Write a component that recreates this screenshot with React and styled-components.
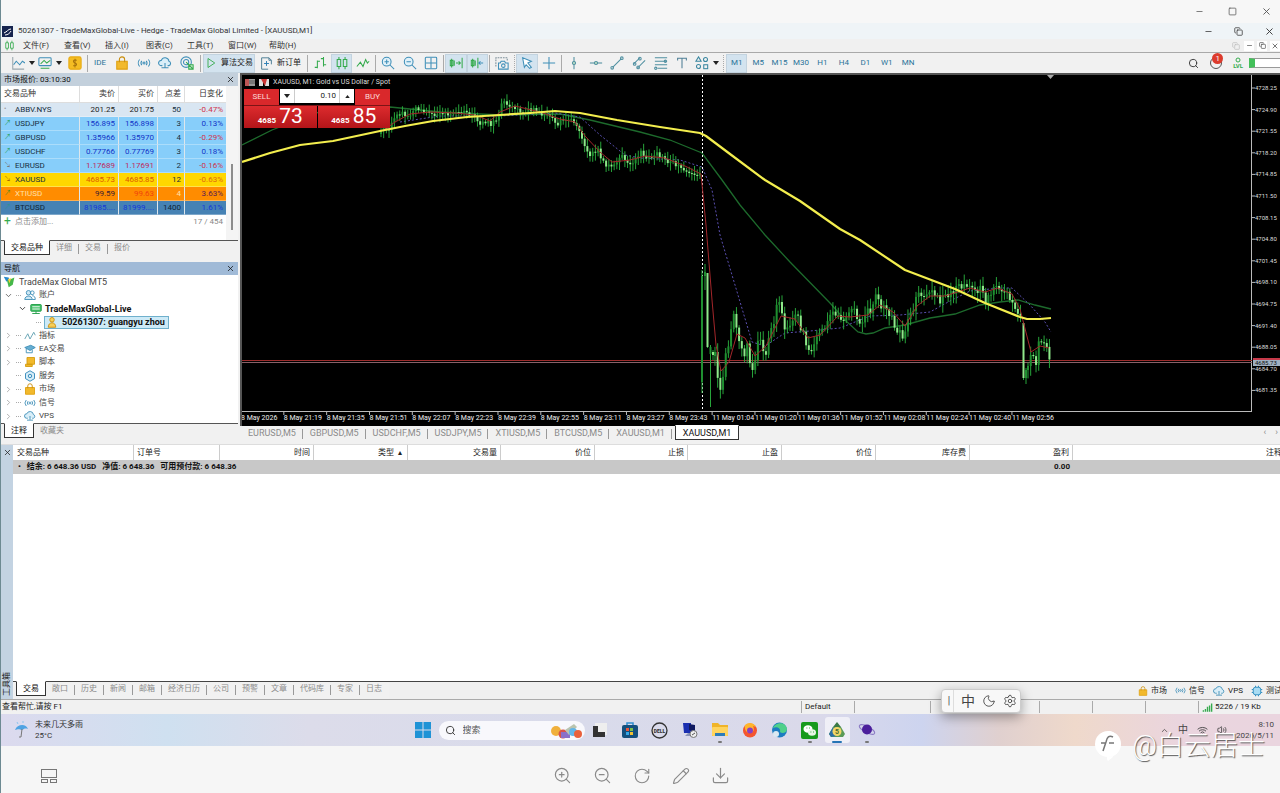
import React from "react";
import styled, { createGlobalStyle, css } from "styled-components";
import {
  Search, Minus, Square, X, Copy, ZoomIn, ZoomOut, RotateCw, Pencil, Download,
  Moon, Settings, Wifi, Volume2, ChevronDown, ChevronRight, ChevronUp,
} from "lucide-react";

const BLUE = "#3f8fb8";
const GREEN = "#35ab4d";
const GOLD = "#f2b92c";

const GlobalStyle = createGlobalStyle`
  * { box-sizing: border-box; }
  body {
    margin: 0;
    background: #f6f6f6;
    font-family: Roboto, "Noto Sans CJK SC", sans-serif;
    font-size: 8px;
    line-height: 12px;
    color: #333;
  }
  button, input {
    font: inherit;
    color: inherit;
    margin: 0;
    padding: 0;
    border: 0;
    background: none;
  }
  svg { display: block; flex: none; }
  ul { list-style: none; margin: 0; padding: 0; }
`;

/* ---------- icons ---------- */

const Ico = ({ size = 14, color = BLUE, children }) => (
  <svg width={size} height={size} viewBox="0 0 16 16" fill="none" stroke={color} strokeWidth="1.2">
    {children}
  </svg>
);

const Caret = () => (
  <svg width="6" height="4" viewBox="0 0 6 4"><path d="M0 0h6L3 4z" fill="#222" /></svg>
);

const icons = {
  chartLine: <Ico><path d="M2 1v14h13" stroke="#9aa7ad" /><path d="M3 10l3-4 4 4 3-4 3 2" /></Ico>,
  template: <Ico><rect x="1" y="2" width="14" height="9" rx="1" /><path d="M3 9l4-4 3 3 4-3M3 14h10" stroke={GREEN} /></Ico>,
  dollar: <Ico><rect x="1" y="1" width="14" height="14" rx="2" fill="#f4bd23" stroke="#e8aa10" /><path d="M10 5c-4-2-5 2-2 3s2 4-2 3M8 3v10" stroke="#a8740c" /></Ico>,
  bag: <Ico><path d="M2 6h12v9H2z" fill={GOLD} stroke="#dfa010" /><path d="M5 7V4a3 3 0 016 0v3" stroke="#c98d0c" /></Ico>,
  signal: <Ico><circle cx="8" cy="8" r="1.2" /><path d="M5.500 5.500a4 4 0 000 5M10.500 5.500a4 4 0 010 5M3 4a6 6 0 000 8M13 4a6 6 0 010 8" /></Ico>,
  cloud: <Ico><path d="M5 11H3.500a3 3 0 01.3-6A4.500 4.500 0 0112.500 6a2.600 2.600 0 010 5H11M8 8v5M4 13.500h8" fill="#d9eef8" /></Ico>,
  world: <Ico><circle cx="7" cy="7" r="6" /><circle cx="7" cy="7" r="3" /><path d="M7 7l8 8M10 10h5v5h-5z" stroke={GREEN} fill="#c9ecd0" /></Ico>,
  play: <Ico size={12} color={GREEN}><path d="M4 2l9 6-9 6z" /></Ico>,
  newOrder: <Ico size={13}><path d="M10 15H2V1h9l3 3v5M11 1v3h3" stroke="#4f7f96" /><path d="M8 5v6M5 8h6" stroke="#2f7fb4" /></Ico>,
  bars: <Ico color={GREEN}><path d="M5 5v9M5 6h3M2 13h3M12 1v11M12 10h3M9 3h3" /></Ico>,
  candles: <Ico color={GREEN}><path d="M2.500 4h4v8h-4zM9.500 4h4v8h-4zM4.500 1v3M4.500 12v3M11.500 1v3M11.500 12v3" /></Ico>,
  line: <Ico color={GREEN}><path d="M1 12l4-5 3 5 3-8 2 4 2-2" /></Ico>,
  zoomIn: <Ico><circle cx="6.500" cy="6.500" r="5" fill="#e1f1f9" /><path d="M10 10l5 5M4 6.500h5M6.500 4v5" /></Ico>,
  zoomOut: <Ico><circle cx="6.500" cy="6.500" r="5" fill="#e1f1f9" /><path d="M10 10l5 5M4 6.500h5" /></Ico>,
  grid: <Ico><rect x="1.500" y="1.500" width="13" height="13" rx="1" /><path d="M8 2v12M2 8h12" /></Ico>,
  shiftEnd: <Ico color={GREEN}><path d="M1.500 5h3v6h-3zM3 3v10M6 5v6M8 8h5M11 6l2 2-2 2M15 2v12" /></Ico>,
  shift: <Ico color={GREEN}><path d="M1.500 5h3v6h-3zM3 3v10M6 5v6M9 2v12" /><path d="M15 8h-5M12 6l-2 2 2 2" stroke={BLUE} /></Ico>,
  camera: <Ico><path d="M1 12V2h13v4" strokeDasharray="2 1" stroke="#7c8f99" /><path d="M4 8h2l1-2h4l1 2h3v7H4z" /><circle cx="9.500" cy="11" r="2" /></Ico>,
  cursor: <Ico><path d="M3 2l10 4-4 2 4 5-2 1-4-4-2 3z" fill="#fff" /></Ico>,
  cross: <Ico><path d="M8 1v14M1 8h14" /></Ico>,
  vline: <Ico color="#4f8fa0"><path d="M8 1v14" /><circle cx="8" cy="8" r="1.800" fill="#bfe3c6" /></Ico>,
  hline: <Ico color="#4f8fa0"><path d="M1 8h14" /><circle cx="8" cy="8" r="1.800" fill="#bfe3c6" /></Ico>,
  trend: <Ico color="#4f8fa0"><path d="M3 13L13 3" /><circle cx="2.500" cy="13.500" r="1.500" /><circle cx="13.500" cy="2.500" r="1.500" /></Ico>,
  channel: <Ico color="#4f8fa0"><path d="M2 9l7-7M6 14l9-9" /><circle cx="3" cy="9" r="1.500" /><circle cx="9" cy="3" r="1.500" /><circle cx="7" cy="13" r="1.500" /></Ico>,
  fib: <Ico color="#4f8fa0"><path d="M1 2h14M1 6h14M1 10h14M4 14h11" /><circle cx="2" cy="14" r="1.300" /><circle cx="13" cy="6" r="1.300" /></Ico>,
  text: <Ico color="#4f7f96"><path d="M3 5V2.500h10V5M8 2.500V14" /></Ico>,
  shapes: <Ico color="#3a87a0"><path d="M4 1l3 5H1z" /><circle cx="12" cy="4" r="2.300" /><circle cx="4" cy="12" r="2.300" /><rect x="10" y="10" width="4.500" height="4.500" /></Ico>,
  people: <Ico size={12}><circle cx="6" cy="5" r="3" fill="#cfe8f5" /><path d="M1 14c0-6 10-6 10 0z" fill="#cfe8f5" /><circle cx="11" cy="5" r="2.500" /><path d="M11 9c3 0 4 2 4 5h-4" /></Ico>,
  server: <Ico size={12} color="#1f9c46"><rect x="1" y="2" width="14" height="9" rx="1" fill="#45c069" /><path d="M3 5h10M3 8h10" stroke="#fff" /><path d="M8 11v3M3 14h10" /></Ico>,
  user: <Ico size={12} color="#c98d0c"><circle cx="8" cy="5" r="3" fill="#f6cf58" /><path d="M3 15c0-8 10-8 10 0z" fill="#f6cf58" /></Ico>,
  indicator: <Ico size={12} color="#5f9fb0"><path d="M1 12l4-7 3 7 5-9 2 4" /></Ico>,
  cap: <Ico size={12}><path d="M1 6l8-3 6 3-7 4z" fill="#67aed2" /><path d="M3 8v5h8V9" /></Ico>,
  script: <Ico size={12} color="#d59c10"><path d="M4 2h10v9H4zM2 11h9v3H2z" fill={GOLD} /></Ico>,
  gear: <Ico size={12} color="#2f86b8"><path d="M8 1l6 3.500v7L8 15l-6-3.500v-7z" fill="#d7edf8" /><circle cx="8" cy="8" r="2.300" /></Ico>,
  chip: <Ico size={12} color="#2789bd"><rect x="3" y="3" width="10" height="10" rx="3" fill="#a9dcf3" /><path d="M6 1v2M10 1v2M6 13v2M10 13v2M1 6h2M1 10h2M13 6h2M13 10h2" /></Ico>,
  mt: <Ico size={13}><path d="M1 2l6 1 1 4-4 1z" fill="#2789cc" stroke="none" /><path d="M5 7l9-4-2 9-5 3z" fill="#45b749" stroke="none" /><path d="M6 5l4-1-2 6z" fill="#f3d13f" stroke="none" /></Ico>,
  net: <Ico size={11} color={GREEN}><path d="M2 12v2M5 10v4M8 7v7M11 5v9M14 2v12" strokeWidth="2" /></Ico>,
};

const iconAt = (name, size) => React.cloneElement(icons[name], { size });

/* ---------- window frame ---------- */

const Page = styled.div`
  position: relative;
  min-height: 100vh;
  display: flex;
  flex-direction: column;
  overflow: hidden;
  border-left: 1px solid #6d8a92;
`;

const ViewerBar = styled.header`
  height: 23px;
  display: flex;
  align-items: center;
  background: #f7f7f7;
  color: #555;
`;

const TitleBar = styled.div`
  height: 16px;
  display: flex;
  align-items: center;
  gap: 5px;
  padding-left: 1px;
  background: #eff4f7;
`;

const Controls = styled.div`
  display: flex;
  align-items: center;
  gap: ${(p) => p.$gap}px;
  margin-left: auto;
  padding-right: ${(p) => p.$end}px;
`;

const MenuBar = styled.nav`
  height: 14px;
  display: flex;
  align-items: center;
  padding-left: 3px;
  background: #f0f0f0;
  border-bottom: 1px solid #a9a9a9;
`;

const MenuItem = styled.button`
  width: 41px;
  text-align: left;
  white-space: nowrap;
  &:first-of-type { margin-left: 8px; }
`;

const MdiButton = styled.button`
  display: grid;
  place-items: center;
  width: 10px;
  height: 10px;
  background: ${(p) => (p.$faded ? "none" : "#fff")};
  color: ${(p) => (p.$faded ? "#bbb" : "#333")};
`;

const ToolBar = styled.div`
  height: 20px;
  display: flex;
  align-items: center;
  padding-left: 8px;
  background: #f1f1f1;
`;

const ToolGroup = styled.div`
  display: flex;
  width: ${(p) => p.$w}px;
  height: 19px;
`;

const ToolButton = styled.button`
  flex: 1;
  display: flex;
  align-items: center;
  justify-content: center;
  gap: 4px;
  white-space: nowrap;
  color: ${(p) => (p.$blue ? "#2a7399" : "#222")};
  ${(p) => p.$on && css`
    background: #d3e3ef;
    box-shadow: inset 0 0 0 1px #c3d3df;
  `}
`;

const Sep = styled.i`
  flex: none;
  width: 1px;
  height: 17px;
  margin: 0 ${(p) => p.$m || 1}px;
  border-left: 1px ${(p) => (p.$dotted ? "dotted" : "solid")} #aaa;
`;

const BarRight = styled.div`
  margin-left: auto;
  display: flex;
  align-items: center;
  gap: 6px;
`;

const Bell = styled.button`
  display: flex;
  position: relative;
  width: 12px;
  height: 12px;
  margin: 0 5px;
  border: 1px solid #555;
  border-radius: 50%;
`;

const Badge = styled.span`
  position: absolute;
  left: 1px;
  top: -5px;
  width: 11px;
  height: 11px;
  border-radius: 50%;
  background: #dc3b2d;
  color: #fff;
  line-height: 11px;
`;

const Level = styled.div`
  display: flex;
  flex-direction: column;
  align-items: center;
  font-size: 6px;
  line-height: 6px;
  font-weight: 700;
  color: ${GREEN};
`;

const Meter = styled.div`
  width: 31px;
  height: 10px;
  border: 1px solid #999;
  border-right: 0;
  border-left: 6px solid #43c05a;
  background: #fff;
`;

/* ---------- left side ---------- */

const Workspace = styled.div`
  display: flex;
  height: 371px;
  background: #f1f1f1;
`;

const Side = styled.aside`
  width: 237px;
  flex: none;
  display: flex;
  flex-direction: column;
  padding-bottom: 4px;
`;

const PanelHead = styled.div`
  display: flex;
  align-items: center;
  justify-content: space-between;
  height: 13px;
  padding: 0 3px 0 3px;
  background: ${(p) => (p.$active ? "#a0bad7" : "#c3d0dc")};
  color: #111;
`;

const WatchBody = styled.div`
  display: flex;
  height: 154px;
  background: #fff;
`;

const WatchTable = styled.table`
  width: 225px;
  table-layout: fixed;
  border-collapse: separate;
  border-spacing: 0;
  align-self: flex-start;
  th, td {
    height: 14px;
    padding: 0 3px;
    text-align: right;
    vertical-align: top;
    font-weight: 400;
    line-height: 13px;
    border-right: 1px solid #dde6ec;
    border-bottom: 1px solid rgba(255, 255, 255, 0.3);
    white-space: nowrap;
  }
  th { height: 16px; line-height: 16px; border-color: #ddd; }
  th:first-child, td:first-child { text-align: left; }
  th:last-child, td:last-child { border-right: 0; }
`;

const WatchRow = styled.tr`
  background: ${(p) => p.$bg};
  color: ${(p) => p.$fg || "#17303f"};
`;

const Cell = styled.td`
  color: ${(p) => p.$c};
`;

const Symbol = styled.div`
  display: flex;
  height: 13px;
`;

const Arrow = styled.span`
  width: 11px;
  font-size: 7px;
  color: ${(p) => p.$c};
`;

const AddRow = styled.tr`
  color: #888;
  && td { border: 0; }
`;

const Plus = styled.span`
  width: 11px;
  color: ${GREEN};
  font-size: 12px;
`;

const ScrollTrack = styled.div`
  flex: 1;
  display: flex;
  justify-content: center;
  align-items: flex-end;
  padding-bottom: 10px;
  background: #f4f4f4;
`;

const Thumb = styled.div`
  width: 2px;
  height: 66px;
  background: #8d8d8d;
`;

const Tabs = styled.div`
  display: flex;
  height: ${(p) => p.$h || 17}px;
  padding-left: 3px;
  border-top: ${(p) => (p.$plain ? 0 : 1)}px solid #555;
  background: #f1f1f1;
  color: #8b8b8b;
`;

const Tab = styled.button`
  position: relative;
  height: 14px;
  padding: 0 7px 0 6px;
  white-space: nowrap;
  &::after {
    content: "";
    position: absolute;
    right: 0;
    top: 3px;
    height: 10px;
    border-right: 1px solid #999;
  }
  &:last-of-type::after { border: 0; }
  ${(p) => p.$on && css`
    && {
      height: 15px;
      margin-top: -1px;
      padding: 0 6px;
      border: 1px solid #333;
      border-top-color: #fff;
      background: #fff;
      color: #111;
      &::after { border: 0; }
    }
  `}
`;

const Gap = styled.div`
  height: 5px;
`;

const Tree = styled.ul`
  flex: 1;
  display: flex;
  flex-direction: column;
  background: #fff;
`;

const Node = styled.li`
  flex: 1;
  display: flex;
  align-items: center;
  gap: 3px;
  padding-left: ${(p) => p.$pad}px;
  font-size: ${(p) => (p.$cn ? 8 : 9)}px;
  font-weight: ${(p) => (p.$bold ? 700 : 400)};
  color: ${(p) => (p.$bold ? "#111" : "#444")};
`;

const Dash = styled.i`
  width: 5px;
  border-top: 1px dotted #aaa;
`;

const Account = styled.span`
  display: flex;
  align-items: center;
  gap: 4px;
  height: 13px;
  padding: 0 3px 0 1px;
  border: 1px solid #6fb0cc;
  background: #cdeaf7;
`;

/* ---------- chart ---------- */

const ChartSide = styled.main`
  flex: 1;
  min-width: 0;
  margin-left: 2px;
  display: flex;
  flex-direction: column;
`;

const ChartBox = styled.div`
  position: relative;
  height: 353px;
  overflow: hidden;
  background: #000;
  border-top: 2px solid #555;
  border-left: 2px solid #555;
`;

const ChartHead = styled.div`
  position: absolute;
  left: 3px;
  top: 1px;
  display: flex;
  align-items: center;
  gap: 4px;
  color: #ddd;
  font-size: 7px;
  white-space: nowrap;
`;

const Ticket = styled.form`
  position: absolute;
  left: 2px;
  top: 14px;
  width: 146px;
  color: #fff;
`;

const TicketTop = styled.div`
  display: flex;
  height: 16px;
`;

const OrderButton = styled.button`
  width: 35px;
  background: #d9282b;
  color: #fbd8d8;
`;

const Volume = styled.div`
  flex: 1;
  display: flex;
  align-items: stretch;
  margin: 0 1px;
  height: 14px;
  background: #fff;
  color: #222;
  button {
    width: 14px;
    display: grid;
    place-items: center;
  }
  input {
    width: 0;
    flex: 1;
    padding-right: 3px;
    text-align: right;
    border: 1px solid #ccc;
    border-width: 0 1px;
  }
`;

const Prices = styled.div`
  display: flex;
  gap: 1px;
  border-top: 1px solid #7d1416;
`;

const Price = styled.button`
  flex: 1;
  display: flex;
  align-items: flex-end;
  justify-content: center;
  gap: 3px;
  height: 22px;
  padding-bottom: 2px;
  background: linear-gradient(#dd2b2e, #b31519);
  font-weight: 700;
  font-size: 8px;
  line-height: 10px;
  b {
    font-weight: 400;
    font-size: 21px;
    line-height: 19px;
  }
`;

const ChartTabs = styled(Tabs)`
  padding-left: 1px;
  font-size: 9px;
  ${Tab} { padding: 0 7px; }
  ${Tab}:last-of-type { margin-left: 3px; padding: 0 7px; }
`;

const TabArrows = styled.div`
  margin-left: auto;
  display: flex;
  gap: 9px;
  padding-right: 2px;
`;

/* The plot is drawn in window coordinates, the view box starts at its corner. */
const before = [
  [381, 134], [384, 127], [388, 130], [392, 119], [396, 115], [401, 112], [405, 117], [409, 119],
  [412, 110], [420, 109], [428, 110], [432, 116], [440, 113], [450, 114], [456, 110], [468, 111],
  [475, 120], [478, 124], [490, 124], [498, 120], [501, 101], [506, 104], [514, 107], [522, 112],
  [530, 108], [538, 112], [545, 114], [553, 120], [557, 124], [565, 119], [574, 122], [580, 131],
  [585, 148], [590, 155], [597, 149], [602, 158], [607, 168], [615, 162], [622, 156], [630, 163],
  [637, 160], [642, 151], [647, 157], [657, 155], [665, 160], [675, 163], [685, 171], [699, 173],
];
const after = [
  [715, 356], [719, 385], [722, 388], [725, 360], [729, 342], [733, 314], [737, 328], [741, 348],
  [744, 355], [748, 336], [751, 374], [754, 364], [757, 346], [760, 337], [765, 356], [769, 340],
  [773, 325], [777, 307], [780, 302], [784, 332], [788, 330], [792, 320], [796, 313], [800, 325],
  [805, 340], [809, 351], [813, 346], [817, 335], [822, 327], [830, 319], [835, 311], [838, 318],
  [842, 324], [848, 318], [853, 309], [861, 322], [866, 310], [872, 310], [875, 294], [880, 305],
  [888, 309], [893, 323], [899, 332], [903, 338], [906, 325], [909, 312], [914, 306], [918, 295],
  [924, 297], [930, 295], [935, 292], [940, 302], [946, 294], [953, 292], [960, 287], [965, 283],
  [972, 286], [977, 293], [982, 288], [985, 300], [990, 295], [995, 282], [1000, 287], [1006, 293],
  [1011, 301], [1017, 313], [1021, 320],
];
const tail = [
  [1028, 370], [1032, 352], [1036, 366], [1039, 339], [1043, 341], [1047, 350], [1051, 364],
];

const STEP = 2.68;

const levelAt = (pts, x) => {
  let i = 1;
  while (i < pts.length - 1 && pts[i][0] < x) i++;
  const [x0, y0] = pts[i - 1];
  const [x1, y1] = pts[i];
  return y0 + ((y1 - y0) * (x - x0)) / (x1 - x0);
};

const candlesOf = (pts, vol, seed) => {
  const out = [];
  let prev = pts[0][1];
  let s = seed;
  const rnd = () => {
    s = (s * 16807) % 2147483647;
    return s / 2147483647;
  };
  for (let x = pts[0][0]; x <= pts[pts.length - 1][0] + 1; x += STEP) {
    const close = levelAt(pts, x) + (rnd() - 0.5) * vol;
    const top = Math.min(prev, close);
    const low = Math.max(prev, close);
    out.push({
      x, top, low,
      high: top - 2 - rnd() * vol,
      foot: low + 2 + rnd() * vol,
      down: close > prev,
    });
    prev = close;
  }
  return out;
};

const candles = [
  ...candlesOf(before, 6, 77),
  { x: 702, high: 270, foot: 393, top: 276, low: 382, down: false },
  { x: 705, high: 264, foot: 290, top: 272, low: 276, down: false },
  { x: 707.5, high: 273, foot: 348, top: 273, low: 347, down: true },
  { x: 710.5, high: 345, foot: 407, top: 347, low: 354, down: false },
  { x: 713, high: 350, foot: 360, top: 352, low: 355, down: true },
  ...candlesOf(after, 8, 41),
  { x: 1023.500, high: 322, foot: 380, top: 323, low: 378, down: true },
  { x: 1026, high: 368, foot: 384, top: 370, low: 378, down: false },
  ...candlesOf(tail, 8, 9),
];

const yellow = "242,162 270,153 300,145 333,141 380,131 405,126 433,121 467,117 500,115 530,113 555,111 580,113 617,120 660,127 700,133 706,136 730,154 765,180 800,201 840,229 860,240 905,270 955,289 985,303 1020,317 1027,319 1040,319 1051,318";
const green = "242,145 272,130 330,108 390,107 410,109 440,112 500,115 560,114 590,120 640,132 670,140 702,153 722,180 740,205 765,235 790,262 830,303 845,320 858,332 866,334 873,333 885,328 905,325 930,318 955,314 980,305 1000,302 1018,300 1035,305 1051,309";
const purple = "400,122 440,116 500,116 555,113 580,117 600,135 625,155 640,158 680,160 702,167 712,190 720,235 735,285 752,342 765,346 785,333 810,331 840,328 870,316 900,315 930,312 950,301 970,291 1000,288 1012,288 1030,305 1045,322 1051,332";
const red = "384,130 395,122 410,114 430,112 455,113 475,115 490,121 500,112 515,106 540,112 560,119 575,122 585,136 600,152 612,162 630,160 645,156 665,158 685,166 701,174 706,225 712,300 716,345 721,371 729,362 737,334 745,338 755,356 766,346 781,316 795,319 808,338 820,335 838,316 850,317 868,315 880,305 893,312 905,326 917,306 930,296 945,296 970,288 985,292 998,288 1012,294 1020,309 1031,352 1040,346 1049,348";

const priceTicks = [
  "4728.25", "4724.90", "4721.55", "4718.20", "4714.85", "4711.50", "4708.15", "4704.80",
  "4701.45", "4698.10", "4694.75", "4691.40", "4688.05", "4684.70", "4681.35",
];
const timeTicks = [
  "8 May 2026", "8 May 21:19", "8 May 21:35", "8 May 21:51", "8 May 22:07", "8 May 22:23",
  "8 May 22:39", "8 May 22:55", "8 May 23:11", "8 May 23:27", "8 May 23:43", "11 May 01:04",
  "11 May 01:20", "11 May 01:36", "11 May 01:52", "11 May 02:08", "11 May 02:24",
  "11 May 02:40", "11 May 02:56",
];

const Plot = () => (
  <svg width="1038" height="351" viewBox="242 75 1038 351" fill="none">
    <path d="M242 411.500H1252M1251.500 75V412" stroke="#bbb" />
    <g fill="#ddd" stroke="none" fontSize="6">
      {priceTicks.map((t, i) => (
        <text key={t} x="1255" y={90 + i * 21.600}>{t}</text>
      ))}
    </g>
    <g fill="#eee" stroke="none" fontSize="7">
      {timeTicks.map((t, i) => (
        <text key={t} x={241 + i * 42.830} y="420">{t}</text>
      ))}
    </g>
    <g stroke="#bbb">
      {priceTicks.map((t, i) => <path key={t} d={`M1251 ${88 + i * 21.600}h4`} />)}
      {timeTicks.map((t, i) => <path key={t} d={`M${241 + i * 42.830} 412v3`} />)}
    </g>
    <path d="M242 360.500H1252" stroke="#9c2c2c" />
    <path d="M242 362.500H1252" stroke="#8a6068" />
    <polyline points={green} stroke="#1d6a2c" strokeWidth="1.3" />
    <polyline points={purple} stroke="#5a4fb0" strokeDasharray="2 2" />
    <path d="M702.500 75V411" stroke="#fff" strokeDasharray="2 2" />
    {candles.map((c, i) => (
      <g key={i}>
        <path d={`M${c.x} ${c.high}V${c.foot}`} stroke="#27a43a" />
        <rect
          x={c.x - 1}
          y={c.top}
          width="2"
          height={Math.max(1, c.low - c.top)}
          fill={c.down ? "#8fe88a" : "#1f8f30"}
        />
      </g>
    ))}
    <polyline points={red} stroke="#a3262a" />
    <polyline points={yellow} stroke="#f3ee4e" strokeWidth="2.200" strokeLinejoin="round" />
    <path d="M1047 75h7l-3.500 4z" fill="#aaa" />
    <rect x="1253" y="358" width="27" height="3" fill="#c63a4a" />
    <rect x="1253" y="360" width="27" height="6" fill="#9fb0c2" />
    <text x="1255" y="365" fontSize="6" fill="#111">4685.73</text>
  </svg>
);

/* ---------- toolbox ---------- */

const Toolbox = styled.section`
  flex: 1;
  display: flex;
  min-height: 120px;
  border-top: 1px solid #ddd;
  background: #fff;
`;

const Strip = styled.div`
  width: 12px;
  flex: none;
  display: flex;
  flex-direction: column;
  align-items: center;
  justify-content: space-between;
  padding: 3px 0;
  background: #c3d3e2;
  color: #222;
  span {
    writing-mode: vertical-rl;
    text-orientation: sideways;
    transform: rotate(180deg);
  }
`;

const ToolboxMain = styled.div`
  flex: 1;
  min-width: 0;
  display: flex;
  flex-direction: column;
`;

const Scroller = styled.div`
  flex: 1;
  overflow: hidden;
`;

const TradeTable = styled.table`
  width: calc(100% + 2px);
  table-layout: fixed;
  border-collapse: separate;
  border-spacing: 0;
  th {
    height: 15px;
    padding: 0 3px;
    text-align: right;
    font-weight: 400;
    border-right: 1px solid #ccc;
    color: #222;
    white-space: pre;
  }
  th:nth-child(-n + 2) { text-align: left; }
  th:first-child { padding-left: 4px; }
  th:last-child { border: 0; padding: 0; }
  td {
    height: 14px;
    padding: 0 3px;
    background: #c8c8c8;
    color: #111;
    font-weight: 700;
    white-space: pre;
  }
  td:nth-child(2) { text-align: right; }
`;

const ToolboxFoot = styled.div`
  display: flex;
  border-top: 1px solid #444;
  background: #f0f0f0;
`;

const Links = styled.div`
  margin-left: auto;
  display: flex;
  align-items: center;
  gap: 8px;
  margin-right: -2px;
  white-space: nowrap;
  color: #222;
  a {
    display: flex;
    align-items: center;
    gap: 3px;
    color: inherit;
    text-decoration: none;
  }
`;

const StatusBar = styled.footer`
  height: 15px;
  display: flex;
  align-items: center;
  padding-left: 1px;
  border-top: 1px solid #aaa;
  background: #f1f1f1;
  color: #222;
`;

const StatusCell = styled.div`
  width: ${(p) => p.$w}px;
  height: 12px;
  display: flex;
  align-items: center;
  gap: 2px;
  padding-left: 3px;
  border-left: 1px solid #aaa;
  white-space: nowrap;
`;

/* ---------- desktop ---------- */

const TaskBar = styled.div`
  height: 32px;
  display: grid;
  grid-template-columns: 1fr auto 1fr;
  align-items: center;
  padding-left: 8px;
  background: linear-gradient(90deg, #dcdaee 0, #cfe0f0 13%, #dcdcea 24%, #d9dbeb 45%, #dad9ea 64%, #cdd4ef 72%, #e0d0cf 78%, #efd9cb 84%, #ead5de 92%, #ead5df 100%);
`;

const Weather = styled.div`
  display: flex;
  align-items: center;
  gap: 5px;
  padding-left: 5px;
  line-height: 11px;
  p { margin: 0; }
`;

const Apps = styled.div`
  display: flex;
  align-items: center;
  margin-left: 8px;
`;

const AppButton = styled.button`
  position: relative;
  width: ${(p) => p.$w || 30}px;
  height: 26px;
  display: grid;
  place-items: center;
  ${(p) => p.$dot && css`
    &::after {
      content: "";
      position: absolute;
      bottom: 0;
      width: ${p.$dot}px;
      height: 2px;
      border-radius: 1px;
      background: ${p.$dot > 6 ? "#2674b5" : "#777"};
    }
  `}
  ${(p) => p.$on && css`
    border-radius: 3px;
    background: rgba(255, 255, 255, 0.6);
  `}
`;

const SearchPill = styled.label`
  display: flex;
  align-items: center;
  gap: 7px;
  width: 146px;
  height: 19px;
  padding: 0 2px 0 6px;
  margin-left: 6px;
  border-radius: 10px;
  background: #f8f8fc;
  input {
    flex: 1;
    width: 0;
    font-size: 9px;
    &::placeholder { color: #555; opacity: 1; }
  }
`;

const Tray = styled.div`
  justify-self: end;
  display: flex;
  align-items: center;
  gap: 9px;
  padding-right: 6px;
  color: #444;
  span { font-size: 10px; }
  time {
    text-align: right;
    line-height: 11px;
  }
`;

const ViewerTools = styled.div`
  height: 47px;
  display: grid;
  grid-template-columns: 1fr auto 1fr;
  align-items: center;
  padding: 12px 0 0 2px;
  color: #8a8a8a;
`;

const ViewerGroup = styled.div`
  display: flex;
  gap: 21px;
`;

const Thumbs = styled.button`
  width: 16px;
  margin-left: 38px;
`;

const Ime = styled.div`
  position: absolute;
  right: 259px;
  bottom: 80px;
  width: 80px;
  height: 24px;
  display: flex;
  align-items: center;
  gap: 7px;
  padding: 0 3px;
  border: 1px solid #ccc;
  border-radius: 4px;
  background: #f8f8f8;
  box-shadow: 0 4px 12px rgba(0, 0, 0, 0.35);
  color: #444;
  font-size: 14px;
  line-height: 22px;
  white-space: nowrap;
`;

const Bar = styled.span`
  width: 12px;
  text-align: center;
  font-size: 10px;
  border-right: 1px solid #ddd;
`;

const Watermark = styled.div`
  position: absolute;
  right: 15px;
  bottom: 29px;
  display: flex;
  align-items: center;
  gap: 10px;
  color: #fff;
  font-size: 27px;
  font-weight: 300;
  line-height: 36px;
  white-space: nowrap;
  text-shadow: 1px 1px 1px #555;
`;

/* ---------- data ---------- */

const B = "#1234c8";
const R = "#d0324a";
const SKY = "#87cefa";
const quotes = [
  { s: "ABBV.NYS", bid: "201.25", ask: "201.75", sp: "50", ch: "-0.47%", bg: "#d9e6f2", pc: "#222", cc: R, ar: "•", ac: "#999" },
  { s: "USDJPY", bid: "156.895", ask: "156.898", sp: "3", ch: "0.13%", bg: SKY, pc: B, cc: B, ar: "↗", ac: "#1e9e57" },
  { s: "GBPUSD", bid: "1.35966", ask: "1.35970", sp: "4", ch: "-0.29%", bg: SKY, pc: B, cc: R, ar: "↗", ac: "#1e9e57" },
  { s: "USDCHF", bid: "0.77766", ask: "0.77769", sp: "3", ch: "0.18%", bg: SKY, pc: B, cc: B, ar: "↗", ac: "#1e9e57" },
  { s: "EURUSD", bid: "1.17689", ask: "1.17691", sp: "2", ch: "-0.16%", bg: SKY, pc: "#c02860", cc: R, ar: "↘", ac: "#777" },
  { s: "XAUUSD", bid: "4685.73", ask: "4685.85", sp: "12", ch: "-0.63%", bg: "#ffd700", pc: "#dd5a00", cc: "#e06a10", ar: "↘", ac: "#a66a00" },
  { s: "XTIUSD", bid: "99.59", ask: "99.63", sp: "4", ch: "3.63%", bg: "#ff8c00", pc: "#3a2030", ask2: "#f0440c", fg: "#ffe0a8", cc: "#5a1c50", ar: "↗", ac: "#4f8a20" },
  { s: "BTCUSD", bid: "81985....", ask: "81999....", sp: "1400", ch: "1.61%", bg: "#4682b4", pc: "#1438d8", cc: "#1438d8", fg: "#0d2438", ar: "↗", ac: "#2f8f90" },
];

const tree = [
  { t: "指标", i: "indicator" }, { t: "EA交易", i: "cap" }, { t: "脚本", i: "script" },
  { t: "服务", i: "gear", leaf: true }, { t: "市场", i: "bag" }, { t: "信号", i: "signal" },
  { t: "VPS", i: "cloud" },
];

const columns = [
  ["交易品种", 121], ["订单号", 86], ["时间", 94], ["类型  ▴ ", 94], ["交易量", 93], ["价位", 94],
  ["止损", 93], ["止盈", 94], ["价位", 94], ["库存费", 94], ["盈利", 103], ["注释"],
];

const Tools = ({ w, names, on = [] }) => (
  <ToolGroup $w={w}>
    {names.map((n) => (
      <ToolButton key={n} $on={on.includes(n)} aria-label={n}>{icons[n]}</ToolButton>
    ))}
  </ToolGroup>
);

const Watch = () => (
  <>
    <PanelHead><span>市场报价: 03:10:30</span><X size={9} /></PanelHead>
    <WatchBody>
      <WatchTable>
        <colgroup><col width="79" /><col width="39" /><col width="39" /><col width="27" /><col /></colgroup>
        <thead>
          <tr><th>交易品种</th><th>卖价</th><th>买价</th><th>点差</th><th>日变化</th></tr>
        </thead>
        <tbody>
          {quotes.map((q) => (
            <WatchRow key={q.s} $bg={q.bg} $fg={q.fg}>
              <td><Symbol><Arrow $c={q.ac}>{q.ar}</Arrow>{q.s}</Symbol></td>
              <Cell $c={q.pc}>{q.bid}</Cell>
              <Cell $c={q.ask2 || q.pc}>{q.ask}</Cell>
              <td>{q.sp}</td>
              <Cell $c={q.cc}>{q.ch}</Cell>
            </WatchRow>
          ))}
          <AddRow>
            <td><Symbol><Plus>+</Plus>点击添加...</Symbol></td>
            <td colSpan="4">17 / 454</td>
          </AddRow>
        </tbody>
      </WatchTable>
      <ScrollTrack><Thumb /></ScrollTrack>
    </WatchBody>
    <Tabs>
      <Tab $on>交易品种</Tab><Tab>详细</Tab><Tab>交易</Tab><Tab>报价</Tab>
    </Tabs>
  </>
);

const Navigator = () => (
  <>
    <PanelHead $active><span>导航</span><X size={9} /></PanelHead>
    <Tree>
      <Node $pad={2}>{icons.mt}TradeMax Global MT5</Node>
      <Node $pad={3} $cn><ChevronDown size={9} /><Dash />{icons.people}账户</Node>
      <Node $pad={17} $bold><ChevronDown size={9} />{icons.server}TradeMaxGlobal-Live</Node>
      <Node $pad={35} $bold><Dash /><Account>{icons.user}50261307: guangyu zhou</Account></Node>
      {tree.map((n) => (
        <Node key={n.t} $pad={n.leaf ? 15 : 3} $cn>
          {!n.leaf && <ChevronRight size={9} color="#999" />}
          <Dash />
          {iconAt(n.i, 12)}
          {n.t}
        </Node>
      ))}
    </Tree>
    <Tabs>
      <Tab $on>注释</Tab><Tab>收藏夹</Tab>
    </Tabs>
  </>
);

const Chart = () => (
  <ChartSide>
    <ChartBox>
      <Plot />
      <ChartHead>
        <svg width="10" height="7"><rect width="10" height="7" fill="#999" /><path d="M0 2h10M0 4h10" stroke="#555" /><rect width="4" height="7" fill="#b55" /></svg>
        <svg width="10" height="7"><path d="M0 0h4v7H0zM6 0h4v7H6z" fill="#ddd" /><path d="M2 0l4 7 2-7" fill="#c33" /></svg>
        XAUUSD, M1: Gold vs US Dollar / Spot
      </ChartHead>
      <Ticket onSubmit={(e) => e.preventDefault()}>
        <TicketTop>
          <OrderButton type="button">SELL</OrderButton>
          <Volume>
            <button type="button" aria-label="Less"><Caret /></button>
            <input aria-label="Volume" defaultValue="0.10" />
            <button type="button" aria-label="More">
              <svg width="5" height="3" viewBox="0 0 6 4"><path d="M0 4h6L3 0z" fill="#222" /></svg>
            </button>
          </Volume>
          <OrderButton type="button">BUY</OrderButton>
        </TicketTop>
        <Prices>
          <Price type="button">4685<b>73</b></Price>
          <Price type="button">4685<b>85</b></Price>
        </Prices>
      </Ticket>
    </ChartBox>
    <ChartTabs $plain $h={15}>
      {["EURUSD,M5", "GBPUSD,M5", "USDCHF,M5", "USDJPY,M5", "XTIUSD,M5", "BTCUSD,M5", "XAUUSD,M1"].map((t) => (
        <Tab key={t}>{t}</Tab>
      ))}
      <Tab $on>XAUUSD,M1</Tab>
      <TabArrows><span>‹</span><span>›</span></TabArrows>
    </ChartTabs>
  </ChartSide>
);

const TaskIcons = () => (
  <>
    <AppButton aria-label="Desktops">
      <svg width="15" height="15"><rect x="3" y="0" width="12" height="12" fill="#eee" /><path d="M1 3h5v6h7v5H1z" fill="#333" /></svg>
    </AppButton>
    <AppButton aria-label="Store">
      <svg width="16" height="17"><path d="M5 4V1h6v3" fill="none" stroke="#2f8fd0" strokeWidth="1.500" /><rect y="3" width="16" height="13" rx="2" fill="#14507e" /><path d="M4 6h3v3H4z" fill="#e8553a" /><path d="M8 6h3v3H8z" fill="#7cc04a" /><path d="M4 10h3v3H4z" fill="#35a8e8" /><path d="M8 10h3v3H8z" fill="#f2c231" /></svg>
    </AppButton>
    <AppButton aria-label="Dell">
      <svg width="17" height="17"><circle cx="8.500" cy="8.500" r="7.500" fill="none" stroke="#333" strokeWidth="1.300" /><text x="8.500" y="11" fontSize="5" fontWeight="900" textAnchor="middle" fill="#333">DELL</text></svg>
    </AppButton>
    <AppButton aria-label="Remote">
      <svg width="16" height="16"><path d="M1 1h8v3h4v6H8v1H2z" fill="#1a2fb0" /><path d="M7 2l6 1v7l-6-2z" fill="#101a60" /><path d="M3 14l3-3h2l1 3z" fill="#8a93b8" /><circle cx="11.500" cy="12" r="3.500" fill="#eee" stroke="#777" /><path d="M10 13l3-2" stroke="#555" /></svg>
    </AppButton>
    <AppButton $dot={4} aria-label="Explorer">
      <svg width="18" height="16"><path d="M1 1h6l2 2h8v11H1z" fill="#f0b429" /><rect x="1" y="5" width="16" height="9" rx="1" fill="#ffd45e" /><path d="M4 14v-3h10v3z" fill="#2d7cb8" /></svg>
    </AppButton>
    <AppButton aria-label="Firefox">
      <svg width="16" height="16"><circle cx="8" cy="8.500" r="7" fill="#f4552f" /><path d="M3 3c3-3 9-3 11 2l-3-1c2 4 0 7-3 7s-6-3-5-8z" fill="#ffb52c" /><circle cx="8" cy="8.500" r="3" fill="#8a3fc0" /></svg>
    </AppButton>
    <AppButton aria-label="Edge">
      <svg width="17" height="17"><circle cx="8.500" cy="8" r="7.500" fill="#1c7cc0" /><path d="M2 6c2-6 13-7 14 1 0 4-5 5-7 3 1-4-3-6-7-4z" fill="#4fd08a" /><circle cx="5" cy="12" r="3" fill="#dbe9f2" /></svg>
    </AppButton>
    <AppButton $dot={4} aria-label="WeChat">
      <svg width="17" height="17"><rect width="17" height="17" rx="2" fill="#169a1c" /><ellipse cx="7" cy="7" rx="4.500" ry="3.800" fill="#fff" /><ellipse cx="11" cy="10.500" rx="4" ry="3.200" fill="#e6f7e6" /><path d="M5.500 6h.8M8 6h.8M9.500 10h.8M12 10h.8" stroke="#169a1c" strokeWidth="1" /></svg>
    </AppButton>
    <AppButton $on $w={25} $dot={10} aria-label="MetaTrader">
      <svg width="18" height="17"><path d="M9 0l4 5H5z" fill="#3b7a46" /><path d="M5 5h8l4 7-2 3H3l-2-3z" fill="#5a9a58" /><path d="M1 12l4-7 4 9-6 1z" fill="#2c6fa5" /><circle cx="9" cy="9.500" r="4.500" fill="#f2d768" /><text x="9" y="12" fontSize="7" fontWeight="700" textAnchor="middle" fill="#4a6a30">5</text></svg>
    </AppButton>
    <AppButton $w={35} $dot={4} aria-label="Orbit">
      <svg width="18" height="16"><ellipse cx="9" cy="7.500" rx="8.500" ry="3" transform="rotate(28 9 7.500)" fill="none" stroke="#8b7bc4" /><circle cx="9" cy="7.500" r="5" fill="#4b1f9c" /></svg>
    </AppButton>
  </>
);

export default function App() {
  return (
    <Page>
      <GlobalStyle />
      <ViewerBar>
        <Controls $gap={24} $end={8}>
          <button aria-label="Minimize viewer"><Minus size={9} /></button>
          <button aria-label="Maximize viewer"><Square size={9} /></button>
          <button aria-label="Close viewer"><X size={11} /></button>
        </Controls>
      </ViewerBar>
      <TitleBar>
        <svg width="11" height="11"><rect width="11" height="11" fill="#15234e" /><path d="M2 7c3-1 4-4 7-4M3 9c3 0 5-2 6-4" stroke="#fff" fill="none" /></svg>
        50261307 - TradeMaxGlobal-Live - Hedge - TradeMax Global Limited - [XAUUSD,M1]
        <Controls $gap={21} $end={5}>
          <button aria-label="Minimize"><Minus size={9} /></button>
          <button aria-label="Restore"><Copy size={9} /></button>
          <button aria-label="Close"><X size={11} /></button>
        </Controls>
      </TitleBar>
      <MenuBar>
        {iconAt("candles", 11)}
        {["文件(F)", "查看(V)", "插入(I)", "图表(C)", "工具(T)", "窗口(W)", "帮助(H)"].map((m) => (
          <MenuItem key={m}>{m}</MenuItem>
        ))}
        <Controls $gap={3} $end={0}>
          <MdiButton $faded aria-label="Pin chart"><Copy size={8} /></MdiButton>
          <MdiButton aria-label="Minimize chart"><Minus size={7} /></MdiButton>
          <MdiButton aria-label="Restore chart"><Copy size={7} /></MdiButton>
          <MdiButton aria-label="Close chart"><X size={8} /></MdiButton>
        </Controls>
      </MenuBar>
      <ToolBar>
        <ToolGroup $w={54}>
          <ToolButton aria-label="Indicators">{icons.chartLine}<Caret /></ToolButton>
          <ToolButton aria-label="Templates">{icons.template}<Caret /></ToolButton>
        </ToolGroup>
        <ToolGroup $w={23}><ToolButton aria-label="Symbols">{icons.dollar}</ToolButton></ToolGroup>
        <Sep />
        <ToolGroup $w={22}><ToolButton $blue>IDE</ToolButton></ToolGroup>
        <Tools w={87} names={["bag", "signal", "cloud", "world"]} />
        <Sep $m={2} />
        <ToolGroup $w={52}><ToolButton $on>{icons.play}算法交易</ToolButton></ToolGroup>
        <ToolGroup $w={51}><ToolButton>{icons.newOrder}新订单</ToolButton></ToolGroup>
        <Sep />
        <Tools w={65} names={["bars", "candles", "line"]} on={["candles"]} />
        <Sep />
        <Tools w={65} names={["zoomIn", "zoomOut", "grid"]} />
        <Sep />
        <Tools w={43} names={["shiftEnd", "shift"]} on={["shiftEnd", "shift"]} />
        <Sep />
        <Tools w={22} names={["camera"]} />
        <Sep $dotted />
        <Tools w={44} names={["cursor", "cross"]} on={["cursor"]} />
        <Sep />
        <Tools w={130} names={["vline", "hline", "trend", "channel", "fib", "text"]} />
        <ToolGroup $w={28}><ToolButton aria-label="Shapes">{icons.shapes}<Caret /></ToolButton></ToolGroup>
        <Sep $dotted $m={2} />
        <ToolGroup $w={193}>
          {["M1", "M5", "M15", "M30", "H1", "H4", "D1", "W1", "MN"].map((t) => (
            <ToolButton key={t} $blue $on={t === "M1"}>{t}</ToolButton>
          ))}
        </ToolGroup>
        <BarRight>
          <button aria-label="Search"><Search size={11} /></button>
          <Bell aria-label="Notifications"><Badge>1</Badge></Bell>
          <Level>
            <svg width="6" height="6"><circle cx="3" cy="3" r="2" fill="none" stroke={GREEN} /></svg>
            LVL
          </Level>
          <Meter />
        </BarRight>
      </ToolBar>

      <Workspace>
        <Side>
          <Watch />
          <Gap />
          <Navigator />
        </Side>
        <Chart />
      </Workspace>

      <Toolbox>
        <Strip><X size={9} /><span>工具箱</span></Strip>
        <ToolboxMain>
          <Scroller>
            <TradeTable>
              <colgroup>{columns.map(([n, w], i) => <col key={i} width={w} />)}</colgroup>
              <thead>
                <tr>{columns.map(([n], i) => <th key={i}>{n}</th>)}</tr>
              </thead>
              <tbody>
                <tr>
                  <td colSpan="10">{" •   结余: 6 648.36 USD   净值: 6 648.36   可用预付款: 6 648.36"}</td>
                  <td>0.00</td>
                  <td />
                </tr>
              </tbody>
            </TradeTable>
          </Scroller>
          <ToolboxFoot>
            <Tabs $plain>
              <Tab $on>交易</Tab>
              {["敞口", "历史", "新闻", "邮箱", "经济日历", "公司", "预警", "文章", "代码库", "专家", "日志"].map((t) => (
                <Tab key={t}>{t}</Tab>
              ))}
            </Tabs>
            <Links>
              <a href="#market">{iconAt("bag", 10)}市场</a>
              <a href="#signals">{iconAt("signal", 11)}信号</a>
              <a href="#vps">{iconAt("cloud", 12)}VPS</a>
              <a href="#test">{icons.chip}测试</a>
            </Links>
          </ToolboxFoot>
        </ToolboxMain>
      </Toolbox>
      <StatusBar>
        <span>查看帮忙,请按 F1</span>
        <Controls $gap={0} $end={6}>
          <StatusCell $w={53}>Default</StatusCell>
          <StatusCell $w={76} />
          <StatusCell $w={109} />
          <StatusCell $w={53} />
          <StatusCell $w={53} />
          <StatusCell $w={53} />
          <StatusCell $w={76}>{icons.net}5226 / 19 Kb</StatusCell>
        </Controls>
      </StatusBar>

      <TaskBar>
        <Weather>
          <svg width="16" height="18"><path d="M1 9c2-6 11-7 13-1-3-1-4 0-6 1-3-1-4-1-7 0z" fill="#4fa3e3" /><path d="M8 8l-1 8H5" stroke="#777" fill="none" /><path d="M3 1l1 2M9 0v2" stroke="#8cc4ee" /></svg>
          <div><p>未来几天多雨</p><p>25°C</p></div>
        </Weather>
        <Apps>
          <AppButton $w={20} aria-label="Start">
            <svg width="16" height="16"><path d="M0 0h7.500v7.500H0zM8.500 0H16v7.500H8.500zM0 8.500h7.500V16H0zM8.500 8.500H16V16H8.500z" fill="#1f93d6" /></svg>
          </AppButton>
          <SearchPill>
            <Search size={11} />
            <input placeholder="搜索" />
            <svg width="32" height="17"><circle cx="5" cy="9" r="5" fill="#f0b03c" /><circle cx="12" cy="12" r="4.500" fill="#d9534a" /><path d="M10 10h9v6h-9z" fill="#8a6fc8" /><path d="M14 8l9-6 3 3-8 8z" fill="#b9c4b0" /><circle cx="22" cy="10" r="4" fill="#62b5e8" /><circle cx="27" cy="12" r="4" fill="#e8603c" /></svg>
          </SearchPill>
          <TaskIcons />
        </Apps>
        <Tray>
          <ChevronUp size={9} />
          <span>中</span>
          <Wifi size={11} />
          <Volume2 size={10} />
          <time>8:10<br />2026/5/11</time>
        </Tray>
      </TaskBar>

      <ViewerTools>
        <Thumbs aria-label="Thumbnails">
          <svg width="16" height="16" fill="none" stroke="#777"><rect x=".5" y="1.500" width="15" height="8" /><rect x=".5" y="11.500" width="6" height="3" /><rect x="9.500" y="11.500" width="6" height="3" /></svg>
        </Thumbs>
        <ViewerGroup>
          <button aria-label="Zoom in"><ZoomIn size={19} strokeWidth={1.500} /></button>
          <button aria-label="Zoom out"><ZoomOut size={19} strokeWidth={1.500} /></button>
          <button aria-label="Rotate"><RotateCw size={18} strokeWidth={1.500} /></button>
          <button aria-label="Edit"><Pencil size={18} strokeWidth={1.500} /></button>
          <button aria-label="Save"><Download size={19} strokeWidth={1.500} /></button>
        </ViewerGroup>
      </ViewerTools>

      <Ime>
        <Bar>|</Bar>中<Moon size={14} strokeWidth={1.500} /><Settings size={14} strokeWidth={1.500} />
      </Ime>
      <Watermark>
        <svg width="28" height="30"><path d="M14 0a13 13 0 11-1 26c0 2 0 3 1 4l5-4" fill="#fff" /><circle cx="14" cy="13" r="13" fill="#fff" /><path d="M19 6c-4-2-6 0-7 5l-3 9M7 12h5M15 12h5" stroke="#777" strokeWidth="1.500" fill="none" /></svg>
        @白云居士
      </Watermark>
    </Page>
  );
}
